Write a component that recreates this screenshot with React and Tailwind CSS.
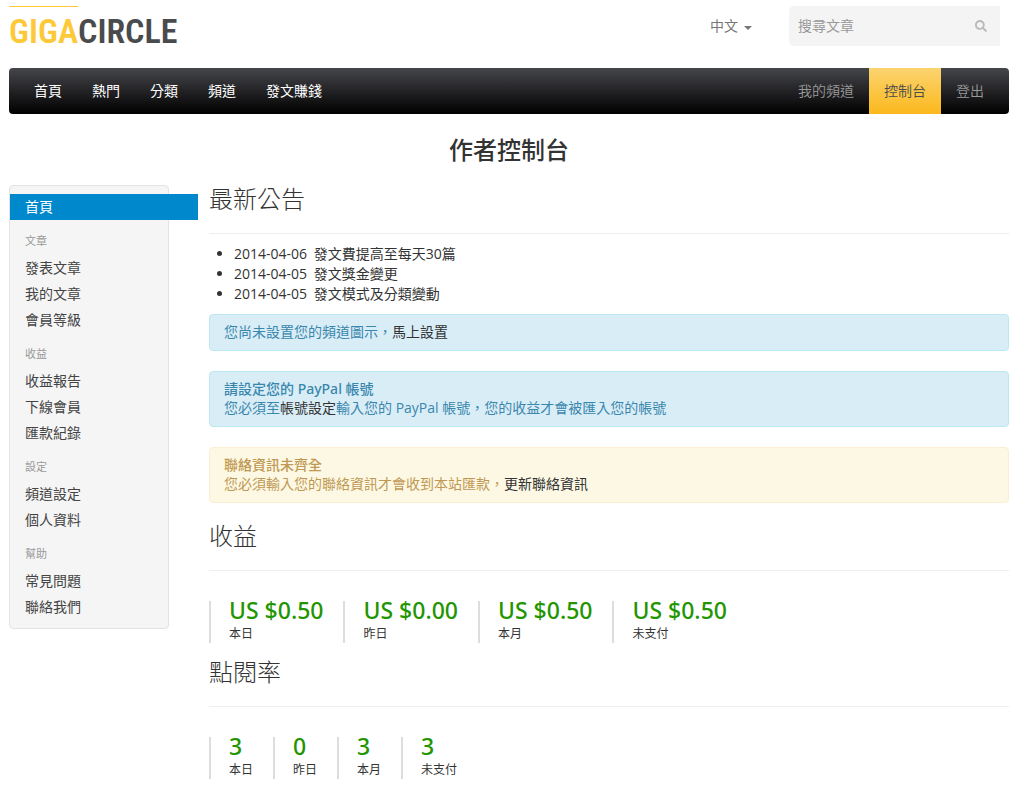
import React, { useState } from 'react';
import { FaSearch } from 'react-icons/fa';

const mainLinks = ['首頁', '熱門', '分類', '頻道', '發文賺錢'];

const sideGroups = [
  { title: '文章', items: ['發表文章', '我的文章', '會員等級'] },
  { title: '收益', items: ['收益報告', '下線會員', '匯款紀錄'] },
  { title: '設定', items: ['頻道設定', '個人資料'] },
  { title: '幫助', items: ['常見問題', '聯絡我們'] }
];

const news = [
  { date: '2014-04-06', title: '發文費提高至每天30篇' },
  { date: '2014-04-05', title: '發文獎金變更' },
  { date: '2014-04-05', title: '發文模式及分類變動' }
];

const earnings = [
  { label: '本日', value: 'US $0.50' },
  { label: '昨日', value: 'US $0.00' },
  { label: '本月', value: 'US $0.50' },
  { label: '未支付', value: 'US $0.50' }
];

const clicks = [
  { label: '本日', value: '3' },
  { label: '昨日', value: '0' },
  { label: '本月', value: '3' },
  { label: '未支付', value: '3' }
];

function Header() {
  const [query, setQuery] = useState('');

  return (
    <header className="flex items-start justify-between pt-[6px] pr-[9px]">
      <a href="#" className="flex font-['Roboto_Condensed','Lato',sans-serif] text-[34px] leading-[48px] font-semibold">
        <span className="border-t border-[#fdc938] text-[#fdc938]">GIGA</span>
        <span className="border-t border-transparent text-[#494b4d]">CIRCLE</span>
      </a>
      <div className="flex items-center gap-[37px]">
        <button className="flex items-center gap-[6px] text-[#777]">
          中文
          <span className="mt-1 border-x-4 border-t-4 border-x-transparent border-t-[#777]" />
        </button>
        <form className="flex h-10 w-[211px] items-center rounded-l-[5px] bg-[#f4f4f4]" onSubmit={e => e.preventDefault()}>
          <input
            type="text"
            aria-label="搜尋文章"
            placeholder="搜尋文章"
            value={query}
            onChange={e => setQuery(e.target.value)}
            className="min-w-0 flex-1 pl-[9px] outline-none placeholder:text-[#999]"
          />
          <button type="submit" aria-label="搜尋" className="px-[13px] text-[#bbb]">
            <FaSearch size={12} />
          </button>
        </form>
      </div>
    </header>
  );
}

function NavBar() {
  return (
    <nav className="mt-[13px] flex justify-between rounded-[4px] bg-linear-to-b/srgb from-[#45464b] to-black px-[10px] leading-[46px]">
      <div className="flex">
        {mainLinks.map(name => (
          <a key={name} href="#" className="px-[15px] text-white">{name}</a>
        ))}
      </div>
      <div className="flex font-[350] text-[#999]">
        <a href="#" className="px-[15px]">我的頻道</a>
        <a href="#" className="bg-linear-to-b/srgb from-[#fcd470] to-[#fbb81c] px-[15px] text-[#494b4d]">控制台</a>
        <a href="#" className="px-[15px]">登出</a>
      </div>
    </nav>
  );
}

function SideBar() {
  return (
    <aside className="w-40 shrink-0 rounded-[4px] border border-[#e3e3e3] bg-[#f5f5f5] py-2 leading-[26px]">
      <a href="#" className="block w-[188px] bg-[#0088cc] px-[15px] text-white">首頁</a>
      {sideGroups.map(group => (
        <div key={group.title}>
          <h3 className="mt-[9px] mb-[2px] px-[15px] text-[11px] leading-6 text-[#999]">{group.title}</h3>
          <ul>
            {group.items.map(item => (
              <li key={item}>
                <a href="#" className="block px-[15px] text-[#444]">{item}</a>
              </li>
            ))}
          </ul>
        </div>
      ))}
    </aside>
  );
}

function SectionTitle({ children }) {
  return (
    <h2 className="border-b border-[#eee] pb-[15px] text-[24px] leading-[38px] font-light text-[#333]">{children}</h2>
  );
}

function Alert({ type, title, children }) {
  const color = type === 'info'
    ? 'border-[#bce8f1] bg-[#d9edf7] text-[#3a87ad]'
    : 'border-[#fbeed5] bg-[#fcf8e3] text-[#c09853]';

  return (
    <div className={`rounded-[4px] border px-[14px] pt-[7px] pb-[9px] leading-[19px] ${color}`}>
      {title && <h4 className="font-['Noto_Sans','Noto_Sans_CJK_TC',sans-serif] font-medium">{title}</h4>}
      <p>{children}</p>
    </div>
  );
}

function AlertLink({ children }) {
  return <a href="#" className="text-[#333]">{children}</a>;
}

function Stats({ data }) {
  return (
    <dl className="mt-[30px] flex gap-5">
      {data.map(item => (
        <div key={item.label} className="flex flex-col-reverse gap-[6px] border-l-2 border-[#ddd] pl-[18px]">
          <dt className="text-[12px] leading-[18px]">{item.label}</dt>
          <dd className="font-['Noto_Sans',sans-serif] text-[23px] leading-[18px] font-medium text-[#229500]">{item.value}</dd>
        </div>
      ))}
    </dl>
  );
}

export default function App() {
  return (
    <div className="bg-white pr-[3px] pb-[9px] pl-[9px] font-['Open_Sans','Noto_Sans_CJK_TC',sans-serif] text-[14px] leading-5 text-[#333]">
      <Header />
      <NavBar />
      <h1 className="mt-4 text-center text-[24px] leading-10 font-medium">作者控制台</h1>
      <div className="mt-[10px] flex items-start gap-10">
        <div className="pt-[5px]">
          <SideBar />
        </div>
        <main className="min-w-0 flex-1">
          <SectionTitle>最新公告</SectionTitle>
          <ul className="mt-[10px] mb-[10px] list-disc pl-[25px]">
            {news.map(item => (
              <li key={item.title}>
                <span className="mr-[3px]">{item.date}</span> <a href="#" className="text-[#333]">{item.title}</a>
              </li>
            ))}
          </ul>
          <div className="mb-[14px] flex flex-col gap-5">
            <Alert type="info">
              您尚未設置您的頻道圖示，<AlertLink>馬上設置</AlertLink>
            </Alert>
            <Alert type="info" title="請設定您的 PayPal 帳號">
              您必須至<AlertLink>帳號設定</AlertLink>輸入您的 PayPal 帳號，您的收益才會被匯入您的帳號
            </Alert>
            <Alert type="warning" title="聯絡資訊未齊全">
              您必須輸入您的聯絡資訊才會收到本站匯款，<AlertLink>更新聯絡資訊</AlertLink>
            </Alert>
          </div>
          <SectionTitle>收益</SectionTitle>
          <Stats data={earnings} />
          <div className="mt-[10px]">
            <SectionTitle>點閱率</SectionTitle>
            <Stats data={clicks} />
          </div>
        </main>
      </div>
    </div>
  );
}
